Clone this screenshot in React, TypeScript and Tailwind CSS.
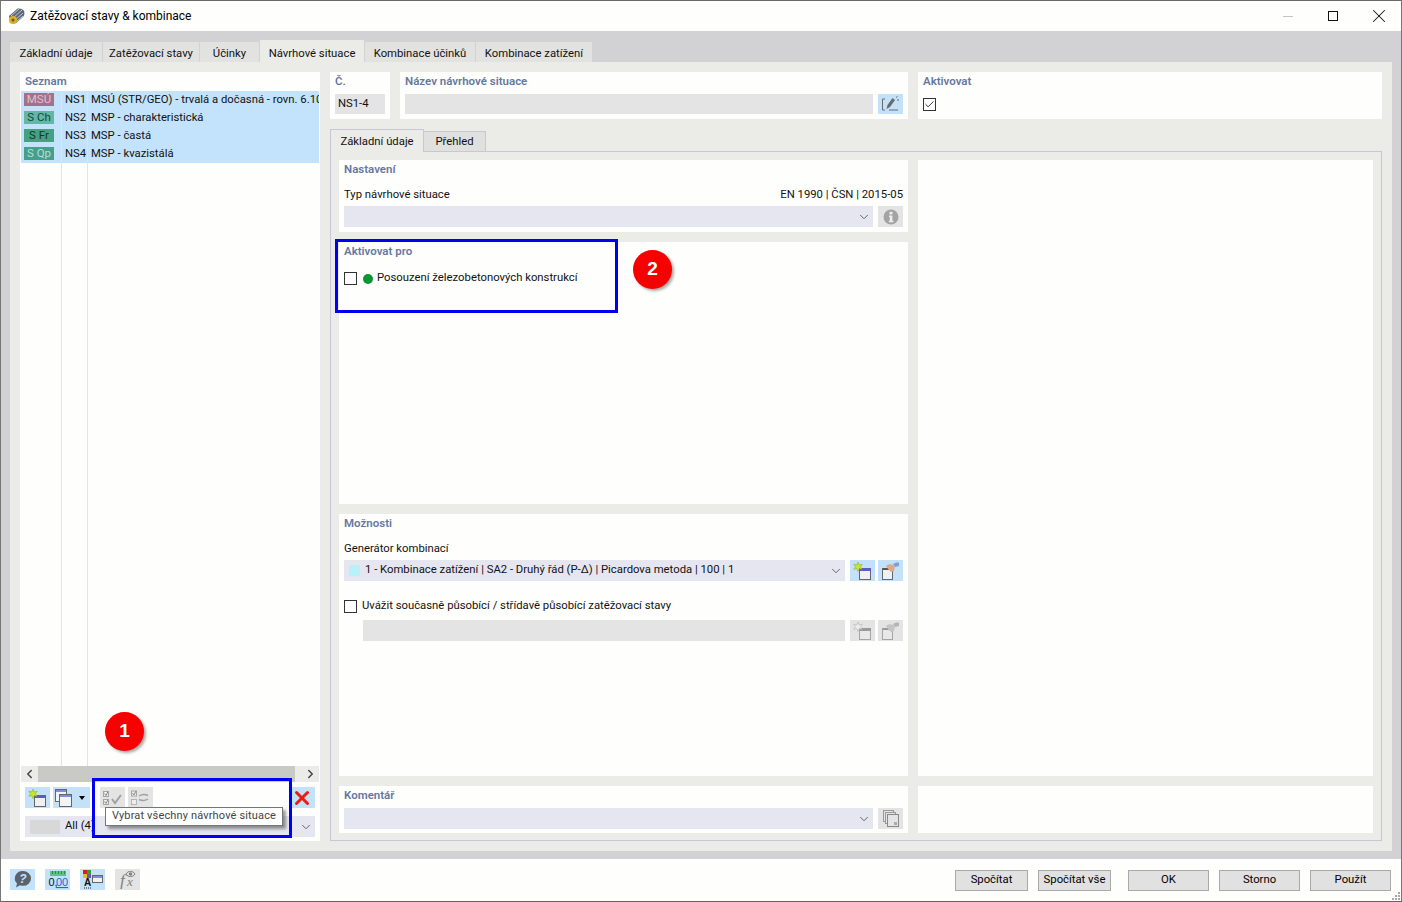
import type { ReactNode } from 'react'
import { ChevronDown, ChevronLeft, ChevronRight, Check, X } from 'lucide-react'

const situations = [
    { badge: 'MSÚ', badgeClass: 'bg-[#a6708c] text-[#d8c3d0]', no: 'NS1', name: 'MSÚ (STR/GEO) - trvalá a dočasná - rovn. 6.10' },
    { badge: 'S Ch', badgeClass: 'bg-[#63b8a4] text-[#17463c]', no: 'NS2', name: 'MSP - charakteristická' },
    { badge: 'S Fr', badgeClass: 'bg-[#44a283] text-[#0f3a2c]', no: 'NS3', name: 'MSP - častá' },
    { badge: 'S Qp', badgeClass: 'bg-[#449f8c] text-[#b5ded4]', no: 'NS4', name: 'MSP - kvazistálá' },
]

const topTabs = [
    { label: 'Základní údaje', w: 'w-[92px]' },
    { label: 'Zatěžovací stavy', w: 'w-[96px]' },
    { label: 'Účinky', w: 'w-[59px]' },
    { label: 'Návrhové situace', w: 'w-[104px]', active: true },
    { label: 'Kombinace účinků', w: 'w-[110px]' },
    { label: 'Kombinace zatížení', w: 'w-[116px]' },
]

function Heading({ children }: { children: ReactNode }) {
    return <div className="h-[18px] px-[5px] text-[11.5px] leading-[19px] font-semibold text-[#6678a0]">{children}</div>
}

function IconButton({ children, disabled, className = 'w-[25px]' }: { children?: ReactNode; disabled?: boolean; className?: string }) {
    return (
        <div className={`flex h-[21px] shrink-0 items-center justify-center ${className} ${disabled ? 'bg-[#e4e4e4]' : 'bg-[#c3e2f9]'}`}>
            {children}
        </div>
    )
}

function Checkbox({ checked }: { checked?: boolean }) {
    return (
        <div className="flex h-[13px] w-[13px] shrink-0 items-center justify-center border border-[#333] bg-white">
            {checked && <Check className="h-[11px] w-[11px] text-[#222]" strokeWidth={2} />}
        </div>
    )
}

// star + small window, used for "new" buttons
function NewWindowIcon({ muted }: { muted?: boolean }) {
    return (
        <svg width="20" height="18" viewBox="0 0 20 18">
            <rect x="6.5" y="6.5" width="11" height="11" fill={muted ? '#e8e8e8' : '#f0f0f0'} stroke={muted ? '#a5a5a5' : '#666'} />
            <rect x="7" y="6" width="11" height="3" fill={muted ? '#9a9a9a' : '#5a5ac8'} />
            <path d="M5 0l1.2 3 3-.8-1.7 2.6 1.7 2.6-3-.8L5 9.6 3.8 6.6l-3 .8 1.7-2.6L.8 2.2l3 .8z" fill={muted ? '#eee' : '#c6e82c'} stroke={muted ? '#aaa' : '#8aa020'} strokeWidth=".5" />
        </svg>
    )
}

// window with a hand-ish blob on top
function EditWindowIcon({ muted }: { muted?: boolean }) {
    return (
        <svg width="20" height="18" viewBox="0 0 20 18">
            <rect x="1.5" y="6.5" width="10" height="11" fill={muted ? '#e8e8e8' : '#f0f0f0'} stroke={muted ? '#a5a5a5' : '#666'} />
            <rect x="2" y="6" width="10" height="2" fill={muted ? '#9a9a9a' : '#555'} />
            <path d="M5 4c2-2 5-2 7-1l2 2-1 4-3 1-3-3z" fill={muted ? '#c4c4c4' : '#dca98a'} />
            <path d="M12 2c2-1 4-2 6-1v3l-4 1z" fill={muted ? '#b5b5b5' : '#7f9fd6'} />
        </svg>
    )
}

function CopyWindowsIcon() {
    return (
        <svg width="17" height="18" viewBox="0 0 17 18">
            <rect x="0.5" y="0.5" width="11" height="12" fill="#f4f4f4" stroke="#666" />
            <rect x="1" y="1" width="10" height="2" fill="#7b8fdc" />
            <rect x="4.5" y="5.5" width="12" height="12" fill="#f4f4f4" stroke="#666" />
            <rect x="5" y="6" width="11" height="2" fill="#7b8fdc" />
        </svg>
    )
}

function SelectAllIcon() {
    return (
        <svg width="20" height="16" viewBox="0 0 20 16" fill="none">
            <rect x=".5" y="1.5" width="5" height="5" stroke="#a5a5a5" fill="#eee" />
            <rect x=".5" y="9.5" width="5" height="5" stroke="#a5a5a5" fill="#eee" />
            <path d="M1.5 3.5l1.500 2 2-4M1.500 11.500l1.500 2 2-4" stroke="#8a8a8a" />
            <path d="M9 9l3 4 6-8" stroke="#a0a0a0" strokeWidth="2" />
        </svg>
    )
}

function InvertIcon() {
    return (
        <svg width="20" height="16" viewBox="0 0 20 16" fill="none">
            <rect x=".5" y="1" width="5" height="5" stroke="#a5a5a5" fill="#eee" />
            <rect x=".5" y="9.5" width="5" height="5" stroke="#b5b5b5" fill="#eee" />
            <path d="M1.500 3l1.500 2 2-4" stroke="#8a8a8a" />
            <path d="M8 6c3-2 6-2 9-.5M17 9c-3 2-6 2-9 .5" stroke="#a0a0a0" strokeWidth="1.500" />
        </svg>
    )
}

function PenIcon() {
    return (
        <svg width="19" height="16" viewBox="0 0 19 16" fill="none">
            <path d="M4 3H1.500v11H4M8 14h9" stroke="#6a6a6a" />
            <path d="M5.500 13l1-4 5-7 2.500 2-5 7z" fill="#6a6a6a" />
            <path d="M15 1.500l1.500-1M16 4h2" stroke="#6a6a6a" />
        </svg>
    )
}

function InfoIcon() {
    return (
        <svg width="16" height="16" viewBox="0 0 16 16">
            <circle cx="8" cy="8" r="7.500" fill="#a3a3a3" />
            <rect x="6.500" y="2.800" width="3" height="2.600" fill="#eee" />
            <path d="M6 6.600h3.400v5.200h1v1.400H5.800v-1.400h1v-3.800H6z" fill="#eee" />
        </svg>
    )
}

function PagesIcon() {
    return (
        <svg width="16" height="18" viewBox="0 0 16 18" fill="none">
            <rect x=".5" y=".5" width="10" height="11" stroke="#999" fill="#e4e4e4" />
            <rect x="2.500" y="2.500" width="10" height="11" stroke="#999" fill="#e4e4e4" />
            <rect x="4.500" y="4.500" width="11" height="12" stroke="#888" fill="#e4e4e4" />
            <rect x="11" y="12" width="3" height="3" fill="#aaa" />
        </svg>
    )
}

function HelpIcon() {
    return (
        <svg width="20" height="18" viewBox="0 0 20 18">
            <path d="M10 1a8 7.400 0 0 1 0 14.800c-1 0-2 0-3-.5L3 17.500l1-4A7.800 7.400 0 0 1 10 1z" fill="#59626d" />
            <text x="10" y="12.500" textAnchor="middle" fontSize="12" fontWeight="700" fontStyle="italic" fontFamily="Liberation Sans, sans-serif" fill="#c3e2f9">?</text>
        </svg>
    )
}

function DecimalsIcon() {
    return (
        <svg width="20" height="19" viewBox="0 0 20 19">
            <rect x="2" y="1" width="16" height="5" fill="#5fc27e" />
            <path d="M4.500 1v3M7.500 1v3M10.500 1v3M13.500 1v3M16.500 1v3" stroke="#2f8a50" />
            <text x="0.500" y="16" fontSize="11" fontFamily="Liberation Sans, sans-serif" fill="#111">0,</text>
            <text x="8" y="16" fontSize="11" fontFamily="Liberation Sans, sans-serif" fill="#2d5fd0" textDecoration="underline">00</text>
        </svg>
    )
}

function ColorsIcon() {
    return (
        <svg width="21" height="20" viewBox="0 0 21 20">
            <rect x="1" y="1" width="4" height="4" fill="#d02020" />
            <rect x="5" y="1" width="4" height="4" fill="#30a030" />
            <rect x="1" y="5" width="4" height="4" fill="#e0c020" />
            <rect x="5" y="5" width="4" height="4" fill="#7050c0" />
            <rect x="10.500" y="6.500" width="10" height="7" fill="#f0f0f0" stroke="#666" />
            <rect x="11" y="7" width="9" height="2" fill="#7b8fdc" />
            <text x="2" y="16.500" fontSize="10" fontWeight="700" fontFamily="Liberation Sans, sans-serif" fill="#111">A</text>
            <path d="M2 19h1M4 19h1M6 19h1M8 19h1" stroke="#222" />
        </svg>
    )
}

function FormulaIcon() {
    return (
        <svg width="21" height="20" viewBox="0 0 21 20" fill="none">
            <text x="3" y="17" fontSize="17" fontStyle="italic" fontFamily="Liberation Serif, serif" fill="#808080">f</text>
            <text x="10" y="17" fontSize="13" fontStyle="italic" fontFamily="Liberation Serif, serif" fill="#808080">x</text>
            <path d="M9 5c2-3.500 7-3.500 9 0-2 3.500-7 3.500-9 0z" stroke="#808080" />
            <circle cx="13.500" cy="5" r="1.700" fill="#808080" />
        </svg>
    )
}

function TitleIcon() {
    return (
        <svg width="17" height="17" viewBox="0 0 17 17">
            <path d="M1 8l8-7c2-1 6 0 7 2s0 5-1 6l-7 6c-2 1-5 0-6-2z" fill="#5d6778" />
            <path d="M3 8l8-7M5 10l9-8M7 12l8-7M9 13l6-5" stroke="#c7ccd6" />
            <circle cx="5" cy="12" r="4" fill="#d8b02c" />
            <circle cx="5" cy="12" r="1.500" fill="#6c5a14" />
        </svg>
    )
}

function ResizeGrip() {
    return (
        <svg width="8" height="8" viewBox="0 0 8 8" fill="#a8a8a8">
            <rect x="6" y="0" width="2" height="2" />
            <rect x="3" y="3" width="2" height="2" />
            <rect x="6" y="3" width="2" height="2" />
            <rect x="0" y="6" width="2" height="2" />
            <rect x="3" y="6" width="2" height="2" />
            <rect x="6" y="6" width="2" height="2" />
        </svg>
    )
}

function FooterButton({ label, className }: { label: string; className: string }) {
    return (
        <div className={`flex h-[21px] items-center justify-center border border-[#a9a9a9] bg-[#e1e1e1] pt-px text-black ${className}`}>
            {label}
        </div>
    )
}

function NumberBadge({ n, className }: { n: number; className: string }) {
    return (
        <div className={`absolute flex h-[39px] w-[39px] items-center justify-center rounded-full bg-[#f60000] font-['Liberation_Sans',sans-serif] text-[19px] font-bold text-white shadow-[2px_2px_3px_rgba(0,0,0,0.35)] ${className}`}>
            {n}
        </div>
    )
}

export default function App() {
    return (
        <div className="relative flex h-[902px] w-[1402px] flex-col overflow-hidden border border-t-[#6a6a6a] border-r-[#777] border-b-[#666] border-l-[#777] bg-[#fefefc] font-['Roboto',sans-serif] text-[11.3px] text-[#111]">
            {/* title bar */}
            <div className="flex h-[30px] shrink-0 items-center">
                <div className="ml-[7px] mr-[5px] flex"><TitleIcon /></div>
                <span className="text-[12px] text-black">Zatěžovací stavy &amp; kombinace</span>
                <div className="ml-auto flex items-center">
                    <div className="h-px w-[10px] bg-[#c4c4c4]" />
                    <div className="ml-[35px] h-[10px] w-[10px] border border-[#111]" />
                    <X className="ml-[30px] mr-[11px] h-[22px] w-[22px] text-[#111]" strokeWidth={1.1} />
                </div>
            </div>

            {/* dialog body */}
            <div className="flex h-[828px] shrink-0 flex-col bg-[#d2d2d5] px-[9px] pb-[8px] pt-[9px]">
                <div className="flex h-[22px] shrink-0 items-end gap-px">
                    {topTabs.map((tab) => (
                        <div
                            key={tab.label}
                            className={`flex items-center justify-center ${tab.w} ${tab.active ? 'h-[22px] bg-[#ebebe8] pt-[6px]' : 'h-[20px] bg-[#e2e2e0] pt-[4px]'}`}
                        >
                            {tab.label}
                        </div>
                    ))}
                </div>

                <div className="flex h-[789px] gap-[10px] bg-[#ebebe8] p-[10px]">
                    {/* list column */}
                    <div className="flex w-[300px] shrink-0 flex-col bg-[#fefefc] px-px">
                        <div className="h-[19px] px-[4px] text-[11.5px] leading-[19px] font-semibold text-[#6678a0]">Seznam</div>
                        <div className="flex min-h-0 flex-1 overflow-hidden">
                            <div className="w-[41px] shrink-0 border-r border-[#e3e3e0]">
                                {situations.map((s) => (
                                    <div key={s.no} className="h-[18px] bg-[#c2e3fb] pl-[3px] pt-[2px]">
                                        <div className={`flex h-[13px] w-[30px] items-center justify-center text-[11.5px] leading-none ${s.badgeClass}`}>{s.badge}</div>
                                    </div>
                                ))}
                            </div>
                            <div className="w-[26px] shrink-0 border-r border-[#e3e3e0]">
                                {situations.map((s) => (
                                    <div key={s.no} className="flex h-[18px] items-center justify-center bg-[#c2e3fb] pl-[2px] pt-px">{s.no}</div>
                                ))}
                            </div>
                            <div className="min-w-0 flex-1">
                                {situations.map((s) => (
                                    <div key={s.no} className="flex h-[18px] items-center overflow-hidden whitespace-nowrap bg-[#c2e3fb] pl-[3px] pt-px">{s.name}</div>
                                ))}
                            </div>
                        </div>
                        <div className="flex h-[16px] shrink-0 items-center bg-[#ebebe8]">
                            <ChevronLeft className="h-[14px] w-[17px] text-[#444]" strokeWidth={2.5} />
                            <div className="h-full w-[257px] bg-[#c9c9c6]" />
                            <ChevronRight className="ml-auto h-[14px] w-[17px] text-[#444]" strokeWidth={2.5} />
                        </div>
                        <div className="mt-[5px] flex h-[21px] shrink-0 items-center px-[4px]">
                            <IconButton><NewWindowIcon /></IconButton>
                            <IconButton className="ml-[3px] w-[37px] justify-start pl-[2px]">
                                <CopyWindowsIcon />
                                <div className="ml-[7px] h-0 w-0 border-x-[3.5px] border-t-[4px] border-x-transparent border-t-black" />
                            </IconButton>
                            <IconButton disabled className="ml-[10px] w-[25px]"><SelectAllIcon /></IconButton>
                            <IconButton disabled className="ml-[3px] w-[25px]"><InvertIcon /></IconButton>
                            <IconButton className="ml-auto w-[23px]">
                                <X className="h-[22px] w-[22px] shrink-0 -translate-x-[2px] text-[#ee1c0e]" strokeWidth={3.2} />
                            </IconButton>
                        </div>
                        <div className="mx-[4px] mb-[4px] mt-[8px] flex h-[21px] shrink-0 items-center bg-[#e6e6f0] pl-[5px]">
                            <div className="h-[14px] w-[30px] bg-[#d8d8d8]" />
                            <span className="ml-[5px]">All (4)</span>
                            <ChevronDown className="ml-auto mr-[2px] h-[14px] w-[14px] text-[#555]" strokeWidth={1.5} />
                        </div>
                    </div>

                    {/* detail column */}
                    <div className="flex min-w-0 flex-1 flex-col">
                        <div className="flex h-[47px] shrink-0 gap-[10px]">
                            <div className="w-[60px] bg-[#fefefc]">
                                <div className="h-[22px] px-[5px] text-[11.5px] leading-[19px] font-semibold text-[#6678a0]">Č.</div>
                                <div className="mx-[5px] flex h-[20px] items-center bg-[#e4e4e4] px-[3px] pt-px">NS1-4</div>
                            </div>
                            <div className="w-[508px] bg-[#fefefc]">
                                <div className="h-[22px] px-[5px] text-[11.5px] leading-[19px] font-semibold text-[#6678a0]">Název návrhové situace</div>
                                <div className="flex gap-[5px] px-[5px]">
                                    <div className="h-[20px] flex-1 bg-[#e4e4e4]" />
                                    <div className="flex h-[20px] w-[25px] items-center justify-center bg-[#c3e2f9]"><PenIcon /></div>
                                </div>
                            </div>
                            <div className="flex-1 bg-[#fefefc]">
                                <div className="h-[22px] px-[5px] text-[11.5px] leading-[19px] font-semibold text-[#6678a0]">Aktivovat</div>
                                <div className="px-[5px] pt-[4px]"><Checkbox checked /></div>
                            </div>
                        </div>

                        <div className="mt-[11px] flex h-[21px] shrink-0 items-end">
                            <div className="z-10 -mb-px flex h-[23px] w-[94px] items-center justify-center border border-b-0 border-[#c8c8d4] bg-[#ebebe8] pt-[3px]">Základní údaje</div>
                            <div className="flex h-[20px] w-[62px] items-center justify-center border border-b-0 border-l-0 border-[#c8c8d4] bg-[#e0e0de] pt-px">Přehled</div>
                        </div>

                        <div className="flex min-h-0 flex-1 gap-[10px] border border-[#c8c8d4] px-[8px] pb-[7px] pt-[8px]">
                            <div className="flex w-[569px] shrink-0 flex-col gap-[10px]">
                                <div className="h-[72px] bg-[#fefefc]">
                                    <Heading>Nastavení</Heading>
                                    <div className="mt-[8px] flex h-[18px] items-center justify-between px-[5px] pt-px">
                                        <span>Typ návrhové situace</span>
                                        <span>EN 1990 | ČSN | 2015-05</span>
                                    </div>
                                    <div className="mt-[2px] flex gap-[5px] px-[5px]">
                                        <div className="flex h-[21px] flex-1 items-center justify-end bg-[#e6e6f0] pr-[2px]">
                                            <ChevronDown className="h-[14px] w-[14px] text-[#555]" strokeWidth={1.5} />
                                        </div>
                                        <IconButton disabled><InfoIcon /></IconButton>
                                    </div>
                                </div>

                                <div className="h-[262px] bg-[#fefefc]">
                                    <Heading>Aktivovat pro</Heading>
                                    <div className="mt-[12px] flex h-[13px] items-center px-[5px]">
                                        <Checkbox />
                                        <div className="ml-[6px] h-[10px] w-[10px] rounded-full bg-[#0c9438]" />
                                        <span className="ml-[4px]">Posouzení železobetonových konstrukcí</span>
                                    </div>
                                </div>

                                <div className="h-[262px] bg-[#fefefc]">
                                    <Heading>Možnosti</Heading>
                                    <div className="mt-[8px] flex h-[18px] items-center px-[5px] pt-px">Generátor kombinací</div>
                                    <div className="mt-[2px] flex gap-[5px] px-[5px]">
                                        <div className="flex h-[21px] flex-1 items-center bg-[#e6e6f0] pl-[5px] pr-[2px]">
                                            <div className="h-[11px] w-[11px] bg-[#b5f3f8]" />
                                            <span className="ml-[5px]">1 - Kombinace zatížení | SA2 - Druhý řád (P-Δ) | Picardova metoda | 100 | 1</span>
                                            <ChevronDown className="ml-auto h-[14px] w-[14px] text-[#555]" strokeWidth={1.5} />
                                        </div>
                                        <IconButton><NewWindowIcon /></IconButton>
                                        <div className="-ml-[2px]"><IconButton><EditWindowIcon /></IconButton></div>
                                    </div>
                                    <div className="mt-[19px] flex h-[13px] items-center px-[5px]">
                                        <Checkbox />
                                        <span className="ml-[5px]">Uvážit současně působící / střídavě působící zatěžovací stavy</span>
                                    </div>
                                    <div className="mt-[7px] flex gap-[5px] pl-[24px] pr-[5px]">
                                        <div className="h-[21px] flex-1 bg-[#e4e4e4]" />
                                        <IconButton disabled><NewWindowIcon muted /></IconButton>
                                        <div className="-ml-[2px]"><IconButton disabled><EditWindowIcon muted /></IconButton></div>
                                    </div>
                                </div>

                                <div className="min-h-0 flex-1 bg-[#fefefc]">
                                    <Heading>Komentář</Heading>
                                    <div className="mt-[4px] flex gap-[5px] px-[5px]">
                                        <div className="flex h-[21px] flex-1 items-center justify-end bg-[#e6e6f0] pr-[2px]">
                                            <ChevronDown className="h-[14px] w-[14px] text-[#555]" strokeWidth={1.5} />
                                        </div>
                                        <IconButton disabled><PagesIcon /></IconButton>
                                    </div>
                                </div>
                            </div>
                            <div className="flex flex-1 flex-col gap-[10px]">
                                <div className="h-[616px] bg-[#fefefc]" />
                                <div className="flex-1 bg-[#fefefc]" />
                            </div>
                        </div>
                    </div>
                </div>
            </div>

            {/* footer */}
            <div className="flex min-h-0 flex-1 items-center pl-[9px] pr-[10px]">
                <div className="mb-[2px] flex gap-[10px]">
                    <IconButton><HelpIcon /></IconButton>
                    <IconButton><DecimalsIcon /></IconButton>
                    <IconButton><ColorsIcon /></IconButton>
                    <IconButton disabled><FormulaIcon /></IconButton>
                </div>
                <div className="ml-auto flex">
                    <FooterButton label="Spočítat" className="w-[73px]" />
                    <FooterButton label="Spočítat vše" className="ml-[10px] w-[73px]" />
                    <FooterButton label="OK" className="ml-[17px] w-[81px]" />
                    <FooterButton label="Storno" className="ml-[10px] w-[81px]" />
                    <FooterButton label="Použít" className="ml-[10px] w-[81px]" />
                </div>
            </div>

            {/* annotations lying over the dialog */}
            <div className="absolute bottom-px right-px"><ResizeGrip /></div>
            <div className="absolute left-[91px] top-[777px] h-[60px] w-[200px] border-[3px] border-[#0000f0]" />
            <div className="absolute left-[334px] top-[238px] h-[74px] w-[283px] border-[3px] border-[#0000f0]" />
            <NumberBadge n={1} className="left-[104px] top-[711px]" />
            <NumberBadge n={2} className="left-[632px] top-[249px]" />
            <div className="absolute left-[104px] top-[806px] flex h-[19px] w-[178px] items-center justify-center border border-[#767676] bg-white text-[11px] tracking-[0.15px] text-[#444] shadow-[3px_3px_3px_rgba(0,0,0,0.4)]">
                Vybrat všechny návrhové situace
            </div>
        </div>
    )
}
